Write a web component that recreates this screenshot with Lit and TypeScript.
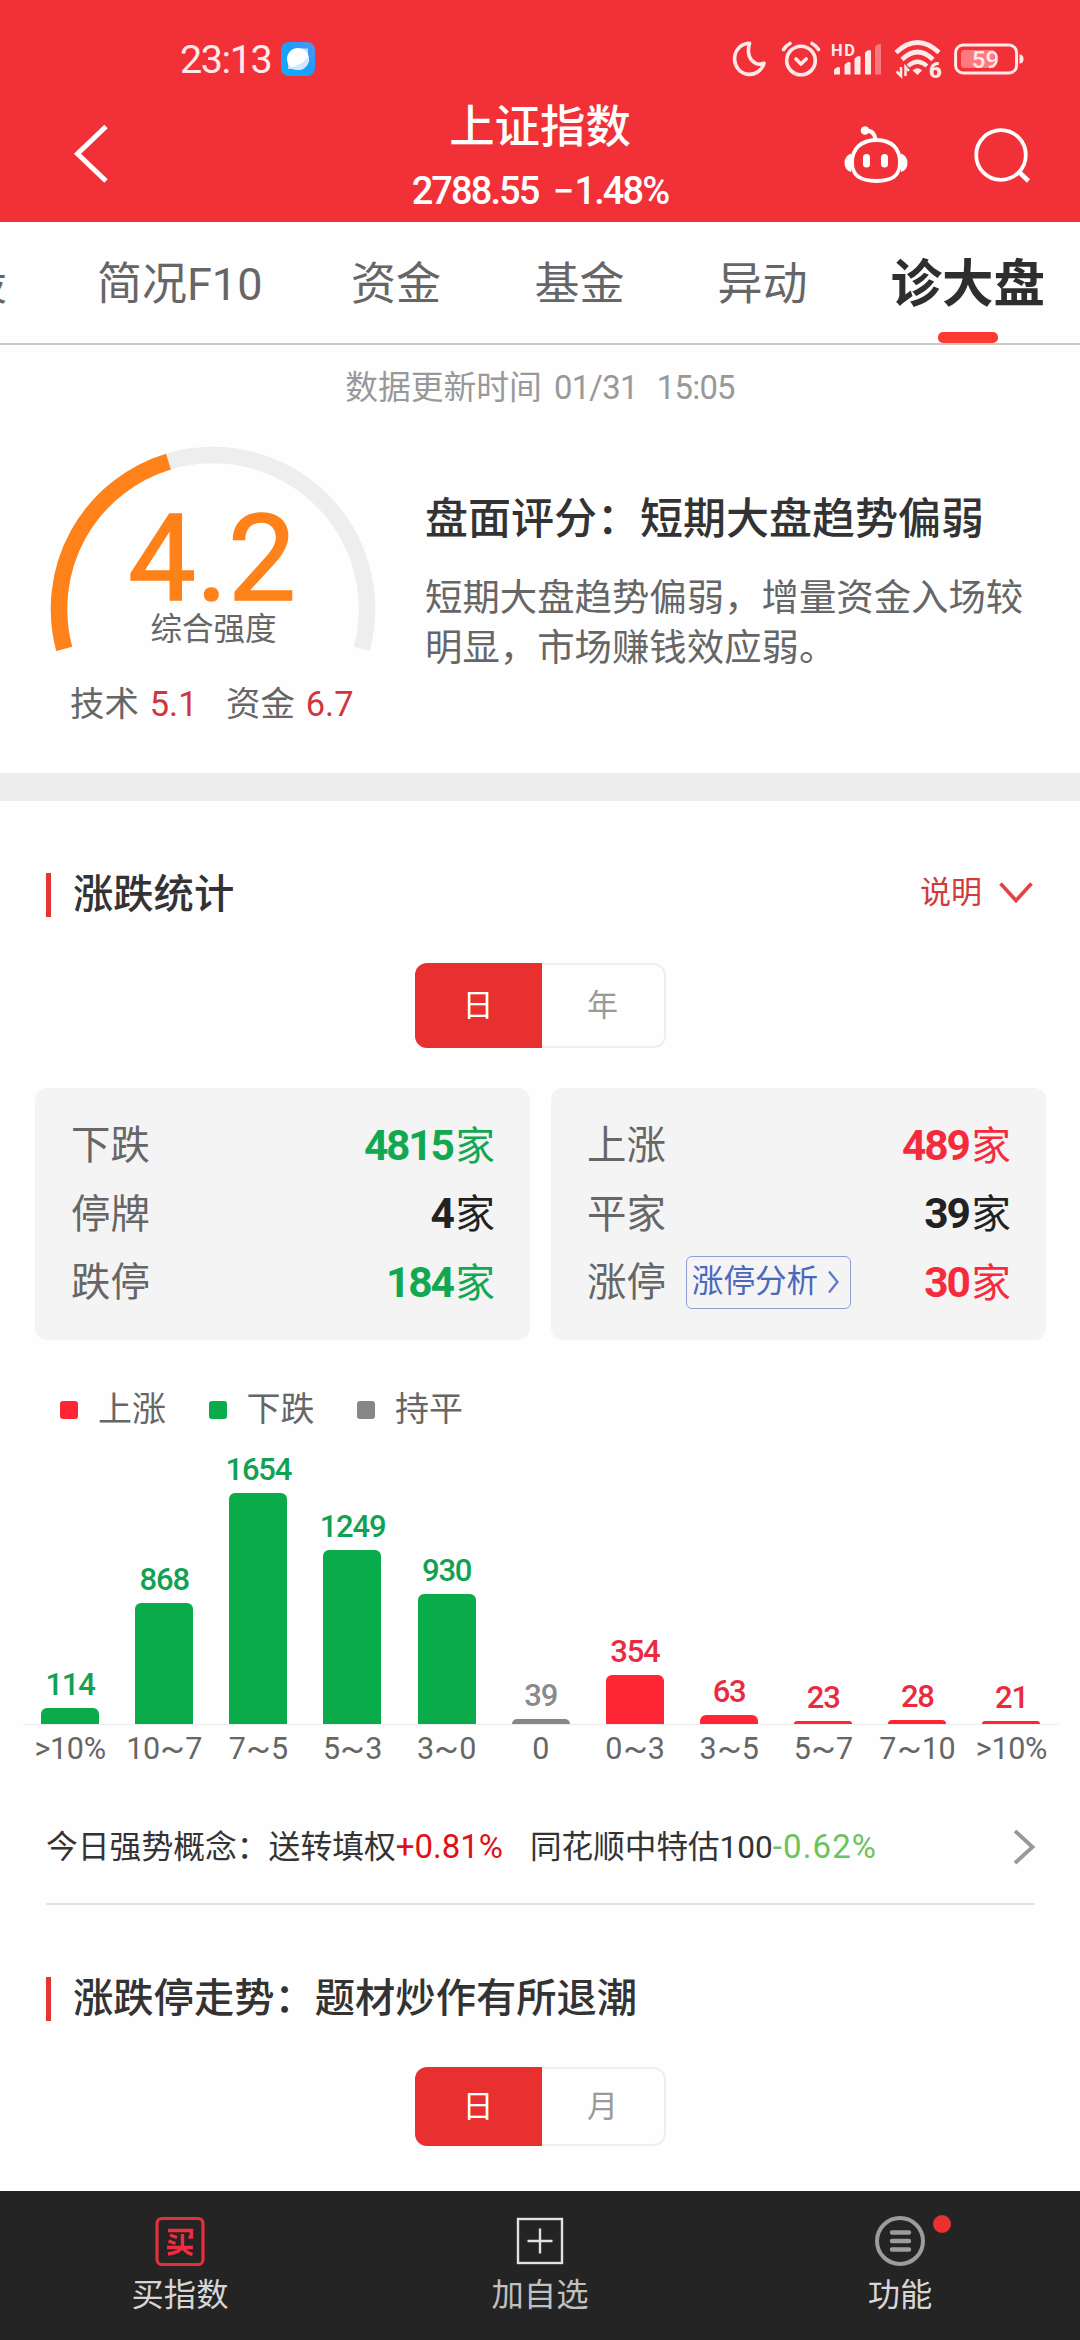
import { LitElement, html, css } from "lit";
import { customElement, property } from "lit/decorators.js";
import { classMap } from "lit/directives/class-map.js";
import { styleMap } from "lit/directives/style-map.js";

const reset = css`
  * {
    box-sizing: border-box;
  }
  svg {
    display: block;
    flex: none;
    overflow: visible;
  }
`;

@customElement("status-bar")
class StatusBar extends LitElement {
  static styles = [
    reset,
    css`
      :host {
        display: flex;
        align-items: center;
        height: 88px;
        padding: 30px 56px 0 180px;
        color: #ffe9e9;
      }
      .time {
        font-size: 39.5px;
        line-height: 58px;
        letter-spacing: -1.4px;
        width: 101px;
        padding-top: 1px;
        white-space: nowrap;
      }
      .spacer {
        flex: 1;
      }
      .moon {
        margin-right: 15px;
      }
      .alarm {
        margin-right: 10px;
      }
      .signal {
        margin-right: 12px;
      }
      .wifi {
        margin-right: 12px;
      }
    `,
  ];

  render() {
    return html`
      <div class="time">23:13</div>
      <svg width="34" height="34" viewBox="0 0 34 34">
        <defs>
          <linearGradient id="sky" x1="1" y1="0" x2="0" y2="1">
            <stop offset="0" stop-color="#5a93f5" />
            <stop offset="0.45" stop-color="#1d9cfa" />
            <stop offset="1" stop-color="#0bb0ff" />
          </linearGradient>
        </defs>
        <rect width="34" height="34" rx="8" fill="url(#sky)" />
        <path d="M20 6.5h7v7zM7 20v7h7z" fill="#b9dcfb" />
        <circle cx="17" cy="17" r="11" fill="#fff" />
        <path d="M27.6 14A11 11 0 0 1 10 25.4Q22 23 27.6 14z" fill="#cfe6fb" />
      </svg>
      <div class="spacer"></div>
      <svg class="moon" width="34" height="36" viewBox="0 0 34 36">
        <path
          d="M17.5 2.2A15 15.6 0 1 0 32 22.2C24.5 25.5 13 19 17.5 2.2z"
          fill="none" stroke="currentColor" stroke-width="3.6" stroke-linejoin="round"
        />
      </svg>
      <svg class="alarm" width="40" height="36" viewBox="0 0 40 36">
        <g fill="none" stroke="currentColor" stroke-width="3.6" stroke-linecap="round" stroke-linejoin="round">
          <circle cx="20" cy="19.5" r="14.3" />
          <path d="M15 18l5 5 5.2-5" />
          <path d="M2.5 8.5Q5 4.500 9 2.500M37.500 8.500Q35 4.500 31 2.500" />
        </g>
      </svg>
      <svg class="signal" width="51" height="36" viewBox="0 0 51 36">
        <text x="0" y="14.500" font-size="16.500" font-weight="700" textLength="24" fill="currentColor">HD</text>
        <g fill="currentColor">
          <path d="M3 33.500v-4q0-2 4-3.500 2 0 2 1v6.500zM13.500 33.500v-9q0-2 4-3.500 2 0 2 1v11.500zM23.500 33.500v-15q0-2 4-3.500 2 0 2 1v17.500zM34 33.500v-21q0-2 4-3.500 2 0 2 1v23.500z" />
          <path d="M44 33.500v-27q0-2 4-3.500 2 0 2 1v29.500z" opacity="0.4" />
        </g>
      </svg>
      <svg class="wifi" width="48" height="42" viewBox="0 0 48 42">
        <g fill="none" stroke="currentColor" stroke-width="4.600">
          <path d="M2 14.500Q23.500-5.500 45 14.500" />
          <path d="M8 21.500Q23.500 6.500 39 21.500" />
          <path d="M14 28Q23.500 19.500 33 28" stroke-width="4.200" />
        </g>
        <path d="M18.500 32.500q5-4.500 9.500 0l-4.500 4.500z" fill="currentColor" />
        <path d="M7 29v9l-4.500-4.500M11.500 38v-9l3.500 4" fill="none" stroke="currentColor" stroke-width="2.500" />
        <text x="35" y="39.500" font-size="22" font-weight="900" fill="currentColor">6</text>
      </svg>
      <svg width="70" height="32" viewBox="0 0 70 32">
        <rect x="1.600" y="2" width="61" height="28" rx="7.500" fill="none" stroke="currentColor" stroke-width="3" />
        <path d="M10.500 7H40v18H10.500a3.500 3.500 0 0 1-3.500-3.500v-11A3.500 3.500 0 0 1 10.500 7z" fill="#ff7a7e" />
        <path d="M65.500 11.500q4 0 4 4.500t-4 4.500z" fill="currentColor" />
        <text x="31.500" y="24.500" font-size="24" font-weight="500" text-anchor="middle" fill="currentColor">59</text>
      </svg>
    `;
  }
}

@customElement("title-bar")
class TitleBar extends LitElement {
  static styles = [
    reset,
    css`
      :host {
        display: grid;
        grid-template-columns: 290px 1fr 290px;
        height: 134px;
        color: #fff;
      }
      .back {
        margin: 36px 0 0 73px;
      }
      .titles {
        text-align: center;
      }
      .name {
        font-size: 45.4px;
        font-weight: 500;
        height: 76px;
        line-height: 79px;
      }
      .quote {
        display: flex;
        justify-content: center;
        gap: 12px;
        font-size: 38px;
        font-weight: 500;
        line-height: 54px;
        letter-spacing: -1.9px;
        white-space: nowrap;
      }
      .minus {
        display: inline-block;
        width: 24px;
      }
      .actions {
        display: flex;
        gap: 62px;
        padding: 36px 0 0 52px;
      }
    `,
  ];

  render() {
    return html`
      <svg class="back" width="36" height="60" viewBox="0 0 36 60">
        <path d="M33 2.500L4.500 29.700 33 57" fill="none" stroke="#fff" stroke-width="5" />
      </svg>
      <div class="titles">
        <div class="name">上证指数</div>
        <div class="quote"><span>2788.55</span><span><span class="minus">−</span>1.48%</span></div>
      </div>
      <div class="actions">
        <svg width="68" height="62" viewBox="0 0 68 62">
          <g fill="none" stroke="#fff" stroke-width="3.800">
            <path d="M34.500 16C50 16 58 25 58 38.500S50 57 34.500 57 10 52 10 38.500 19 16 34.500 16z" />
            <path d="M23 6.500Q32.500 6 33.500 16" />
          </g>
          <circle cx="23" cy="6.500" r="4.300" fill="#fff" />
          <path d="M9 29.500q-6.500 2.500-6.500 9.500t6.500 9zM59 29.500q6.500 2.500 6.500 9.500t-6.500 9z" fill="#fff" />
          <rect x="21" y="30" width="7" height="13.500" rx="3.500" fill="#fff" />
          <rect x="39" y="30" width="7" height="13.500" rx="3.500" fill="#fff" />
        </svg>
        <svg width="60" height="62" viewBox="0 0 60 62">
          <circle cx="29" cy="31" r="24.800" fill="none" stroke="#fff" stroke-width="3.800" />
          <path d="M46.500 47.500L56.500 57" stroke="#fff" stroke-width="4.500" />
        </svg>
      </div>
    `;
  }
}

@customElement("tab-strip")
class TabStrip extends LitElement {
  static styles = [
    reset,
    css`
      :host {
        display: block;
        height: 123px;
        overflow: hidden;
        border-bottom: 2px solid #c9c9c9;
      }
      .tabs {
        display: grid;
        grid-template-columns: 135px 254px 183.5px 183px 173px 155px;
        margin-left: -38px;
        font-size: 45px;
        line-height: 126px;
        color: #666;
        white-space: nowrap;
      }
      .tab {
        height: 121px;
      }
      .active {
        position: relative;
        font-size: 51.5px;
        font-weight: 700;
        color: #2e2e2e;
      }
      .active::after {
        content: "";
        position: absolute;
        left: 47px;
        bottom: 0;
        width: 60px;
        height: 11px;
        border-radius: 5px;
        background: #fb3a30;
      }
    `,
  ];

  render() {
    const tabs = ["股", "简况F10", "资金", "基金", "异动", "诊大盘"];
    return html`<div class="tabs">
      ${tabs.map((t, i) => html`<div class=${classMap({ tab: true, active: i === tabs.length - 1 })}>${t}</div>`)}
    </div>`;
  }
}

@customElement("score-panel")
class ScorePanel extends LitElement {
  static styles = [
    reset,
    css`
      :host {
        display: block;
        height: 428px;
      }
      .updated {
        display: flex;
        justify-content: center;
        gap: 19px;
        font-size: 32.8px;
        line-height: 87px;
        height: 84px;
        color: #999;
      }
      .num {
        letter-spacing: -0.7px;
      }
      .stamp {
        display: flex;
        gap: 12px;
      }
      .body {
        display: flex;
      }
      .left {
        width: 425px;
        padding: 17px 0 0 50px;
      }
      .metrics {
        display: flex;
        margin-top: 27px;
        padding-left: 20px;
        font-size: 34.4px;
        line-height: 50px;
        color: #666;
      }
      .metric {
        display: flex;
        width: 156px;
        gap: 11px;
      }
      .value {
        color: #d0343c;
      }
      .right {
        padding-top: 60px;
      }
      .headline {
        font-size: 43px;
        font-weight: 500;
        line-height: 60px;
        color: #333;
      }
      .summary {
        width: 610px;
        margin-top: 24px;
        font-size: 37.4px;
        line-height: 50px;
        color: #666;
      }
    `,
  ];

  @property({ type: Number }) score = 4.2;

  private arc(fraction: number) {
    const r = 154;
    const start = Math.PI * (195 / 180);
    const point = (a: number) => `${163 + r * Math.cos(a)} ${163 - r * Math.sin(a)}`;
    const sweep = Math.PI * (210 / 180) * fraction;
    return `M${point(start)}A${r} ${r} 0 ${sweep > Math.PI ? 1 : 0} 1 ${point(start - sweep)}`;
  }

  render() {
    return html`
      <div class="updated">
        <div class="stamp"><span>数据更新时间</span><span class="num">01/31</span></div>
        <span class="num">15:05</span>
      </div>
      <div class="body">
        <div class="left">
          <svg width="326" height="206" viewBox="0 0 326 206">
            <path d=${this.arc(1)} fill="none" stroke="#eeeeee" stroke-width="16.500" />
            <path d=${this.arc(this.score / 10)} fill="none" stroke="#ff8119" stroke-width="16.500" />
            <text x="162" y="154" font-size="121" text-anchor="middle" fill="#ff8119" stroke="#ff8119" stroke-width="1.500">4.2</text>
            <text x="163.500" y="194" font-size="31.500" text-anchor="middle" fill="#666">综合强度</text>
          </svg>
          <div class="metrics">
            <div class="metric"><span>技术</span><span class="value">5.1</span></div>
            <div class="metric"><span>资金</span><span class="value">6.7</span></div>
          </div>
        </div>
        <div class="right">
          <div class="headline">盘面评分：短期大盘趋势偏弱</div>
          <div class="summary">短期大盘趋势偏弱，增量资金入场较明显，市场赚钱效应弱。</div>
        </div>
      </div>
    `;
  }
}

@customElement("section-title")
class SectionTitle extends LitElement {
  static styles = [
    reset,
    css`
      :host {
        display: flex;
        align-items: center;
        height: 44px;
        margin: 72px 46px 0;
      }
      .mark {
        width: 5px;
        height: 44px;
        background: #e43535;
      }
      .label {
        flex: 1;
        padding: 0 0 1px 22px;
        font-size: 40.3px;
        font-weight: 500;
        line-height: 42px;
        color: #333;
        white-space: nowrap;
      }
      .help {
        display: flex;
        align-items: center;
        gap: 16px;
        margin: -5px 0 0 0;
        font-size: 31px;
        line-height: 40px;
        color: #d23a3a;
      }
    `,
  ];

  @property() label = "";
  @property() help = "";

  render() {
    return html`
      <div class="mark"></div>
      <div class="label">${this.label}</div>
      ${this.help
        ? html`<div class="help">
            <span>${this.help}</span>
            <svg width="36" height="24" viewBox="0 0 36 24">
              <path d="M2.500 2.500L18 19.500 33.500 2.500" fill="none" stroke="#e04444" stroke-width="3.600" />
            </svg>
          </div>`
        : null}
    `;
  }
}

@customElement("period-toggle")
class PeriodToggle extends LitElement {
  static styles = [
    reset,
    css`
      :host {
        display: flex;
        width: 251px;
        height: 85px;
        margin: 46px auto 0;
        border-radius: 12px;
        overflow: hidden;
        font-size: 31px;
        line-height: 46px;
      }
      :host([compact]) {
        height: 79px;
      }
      .on,
      .off {
        display: flex;
        align-items: center;
        justify-content: center;
        padding-top: 1px;
      }
      .on {
        width: 127px;
        background: #e93030;
        color: #fff;
      }
      .off {
        flex: 1;
        border: 2px solid #eeeeee;
        border-left: 0;
        border-radius: 0 12px 12px 0;
        color: #999;
      }
    `,
  ];

  @property() first = "";
  @property() second = "";

  render() {
    return html`<div class="on">${this.first}</div>
      <div class="off">${this.second}</div>`;
  }
}

type Row = { name: string; count: number; tone: string; link?: string };

@customElement("count-card")
class CountCard extends LitElement {
  static styles = [
    reset,
    css`
      :host {
        display: block;
        flex: 1;
        height: 252px;
        padding: 24px 35px 20px 36px;
        border-radius: 12px;
        background: #f4f4f4;
      }
      .row {
        display: flex;
        align-items: center;
        height: 68.5px;
        font-size: 39.4px;
        line-height: 68px;
        color: #666;
      }
      .link {
        display: flex;
        align-items: center;
        gap: 10px;
        height: 53px;
        margin: -2px 0 0 20px;
        padding: 0 11px 0 5px;
        border: 1.5px solid #8e9ed3;
        border-radius: 6px;
        font-size: 31.6px;
        line-height: 50px;
        color: #4b68bd;
        white-space: nowrap;
      }
      .count {
        flex: 1;
        text-align: right;
        white-space: nowrap;
      }
      .digits {
        font-size: 42.5px;
        font-weight: 700;
        letter-spacing: -2.2px;
        margin-right: 3px;
      }
      .down {
        color: #11a851;
      }
      .flat {
        color: #222;
      }
      .up {
        color: #f52b3d;
      }
    `,
  ];

  @property({ attribute: false }) rows: Row[] = [];

  render() {
    return this.rows.map(
      (r) => html`<div class="row">
        <span>${r.name}</span>
        ${r.link
          ? html`<span class="link"
              >${r.link}<svg width="11" height="22" viewBox="0 0 11 22">
                <path d="M1 0.500l8.500 10.500-8.500 10.500" fill="none" stroke="#6079c6" stroke-width="2.300" /></svg
            ></span>`
          : null}
        <span class="count ${r.tone}"><span class="digits">${r.count}</span>家</span>
      </div>`
    );
  }
}

@customElement("change-chart")
class ChangeChart extends LitElement {
  static styles = [
    reset,
    css`
      :host {
        display: block;
      }
      .legend {
        display: flex;
        height: 48px;
        margin: 45px 0 0 60px;
        line-height: 48px;
        font-size: 34px;
        color: #666;
      }
      .key {
        display: flex;
        align-items: center;
        gap: 20px;
        width: 148.5px;
      }
      .swatch {
        width: 18px;
        height: 18px;
        margin-top: 1px;
        border-radius: 3px;
      }
      .plot {
        display: grid;
        grid-template-columns: repeat(11, 94.15px);
        align-items: end;
        height: 292px;
        margin-left: 23px;
        width: 1035.6px;
        border-bottom: 1px solid #ececec;
      }
      .col {
        display: flex;
        flex-direction: column;
        align-items: center;
      }
      .value {
        font-size: 31px;
        font-weight: 500;
        line-height: 34px;
        letter-spacing: -1.2px;
        padding-bottom: 6px;
      }
      .bar {
        width: 58px;
        border-radius: 6px 6px 0 0;
      }
      .axis {
        display: grid;
        grid-template-columns: repeat(11, 94.15px);
        margin-left: 23px;
        font-size: 30.5px;
        line-height: 48px;
        height: 50px;
        text-align: center;
        letter-spacing: -0.3px;
        color: #666;
        white-space: nowrap;
      }
      .to {
        display: inline-block;
        transform: scaleX(1.2);
        margin: 0 2.5px;
      }
      .down {
        color: #11a153;
      }
      .flat {
        color: #8a8a8a;
      }
      .up {
        color: #ea2b3f;
      }
      .fill-down {
        background: #0aab4b;
      }
      .fill-flat {
        background: #878787;
      }
      .fill-up {
        background: #fe2634;
      }
    `,
  ];

  private data: [string[], number, string][] = [
    [[">10%"], 114, "down"],
    [["10", "7"], 868, "down"],
    [["7", "5"], 1654, "down"],
    [["5", "3"], 1249, "down"],
    [["3", "0"], 930, "down"],
    [["0"], 39, "flat"],
    [["0", "3"], 354, "up"],
    [["3", "5"], 63, "up"],
    [["5", "7"], 23, "up"],
    [["7", "10"], 28, "up"],
    [[">10%"], 21, "up"],
  ];

  render() {
    return html`
      <div class="legend">
        <div class="key"><span class="swatch fill-up"></span>上涨</div>
        <div class="key"><span class="swatch fill-down"></span>下跌</div>
        <div class="key"><span class="swatch fill-flat"></span>持平</div>
      </div>
      <div class="plot">
        ${this.data.map(
          ([, n, tone]) => html`<div class="col">
            <div class="value ${tone}">${n}</div>
            <div class="bar fill-${tone}" style=${styleMap({ height: `${Math.max(3, Math.round(n * 0.1395))}px` })}></div>
          </div>`
        )}
      </div>
      <div class="axis">
        ${this.data.map(([[from, to]]) =>
          to === undefined ? html`<span>${from}</span>` : html`<span>${from}<span class="to">~</span>${to}</span>`
        )}
      </div>
    `;
  }
}

@customElement("concept-row")
class ConceptRow extends LitElement {
  static styles = [
    reset,
    css`
      :host {
        display: flex;
        align-items: center;
        height: 114px;
        margin: 16px 45px 0 46px;
        border-bottom: 2px solid #e3e3e3;
        font-size: 31.6px;
        line-height: 48px;
        color: #333;
        white-space: nowrap;
      }
      .first {
        display: block;
        width: 484px;
        font-size: 31.8px;
      }
      .second {
        flex: 1;
      }
      .rise,
      .fall {
        font-size: 33px;
      }
      .rise {
        color: #e01016;
      }
      .fall {
        color: #6bc35b;
        letter-spacing: 1.1px;
      }
    `,
  ];

  render() {
    return html`
      <span class="first">今日强势概念：送转填权<span class="rise">+0.81%</span></span>
      <span class="second">同花顺中特估100<span class="fall">-0.62%</span></span>
      <svg width="22" height="36" viewBox="0 0 22 36">
        <path d="M2 2l17.500 16L2 34" fill="none" stroke="#999" stroke-width="3.800" />
      </svg>
    `;
  }
}

@customElement("bottom-bar")
class BottomBar extends LitElement {
  static styles = [
    reset,
    css`
      :host {
        display: grid;
        grid-template-columns: repeat(3, 1fr);
        height: 149px;
        margin-top: auto;
        background: #242424;
        color: #d6d6d6;
        font-size: 32.3px;
        line-height: 48px;
      }
      .item {
        display: flex;
        flex-direction: column;
        align-items: center;
        gap: 4px;
        padding-top: 24px;
      }
      .dim {
        color: #c0c0c0;
      }
      .icon {
        position: relative;
      }
      .dot {
        position: absolute;
        left: 59px;
        top: 0;
        width: 18px;
        height: 18px;
        border-radius: 50%;
        background: #ea3131;
      }
    `,
  ];

  render() {
    return html`
      <div class="item">
        <svg width="52" height="52" viewBox="0 0 52 52">
          <rect x="3" y="3.500" width="46" height="46" rx="5" fill="none" stroke="#e5303c" stroke-width="3.200" />
          <g fill="none" stroke="#f02c40" stroke-width="3.400">
            <path d="M14 15.500h23.500v6.500h-3" />
            <path d="M16 20l7 2.500M14.500 26l7 2.500" />
            <path d="M13 32.500h26M28.500 19v12q-2 6.500-14.500 8M29 33q3 4.500 9.500 6.500" />
          </g>
        </svg>
        <span>买指数</span>
      </div>
      <div class="item dim">
        <svg width="52" height="52" viewBox="0 0 52 52">
          <rect x="4" y="4" width="44" height="44" fill="none" stroke="#e2e2e2" stroke-width="2.400" />
          <path d="M26 13.500v25M13.500 26h25" stroke="#e2e2e2" stroke-width="2.400" />
        </svg>
        <span>加自选</span>
      </div>
      <div class="item">
        <div class="icon">
          <svg width="52" height="52" viewBox="0 0 52 52">
            <circle cx="26" cy="26" r="23" fill="none" stroke="#9c9c9c" stroke-width="4" />
            <path d="M18 17.500h17M18 26h17M18 34.500h17" stroke="#9c9c9c" stroke-width="4.400" stroke-linecap="round" />
          </svg>
          <span class="dot"></span>
        </div>
        <span>功能</span>
      </div>
    `;
  }
}

@customElement("app-root")
class AppRoot extends LitElement {
  static styles = [
    reset,
    css`
      :host {
        display: flex;
        flex-direction: column;
        width: 1080px;
        height: 2340px;
        overflow: hidden;
        background: #fefefe;
        font-family: Roboto, "Noto Sans CJK SC", sans-serif;
      }
      .top {
        height: 222px;
        background: #f23037;
      }
      .band {
        height: 28px;
        background: #ededed;
      }
      .cards {
        display: flex;
        gap: 21px;
        margin: 40px 34px 0 35px;
      }
    `,
  ];

  private falling: Row[] = [
    { name: "下跌", count: 4815, tone: "down" },
    { name: "停牌", count: 4, tone: "flat" },
    { name: "跌停", count: 184, tone: "down" },
  ];

  private rising: Row[] = [
    { name: "上涨", count: 489, tone: "up" },
    { name: "平家", count: 39, tone: "flat" },
    { name: "涨停", count: 30, tone: "up", link: "涨停分析" },
  ];

  render() {
    return html`
      <div class="top">
        <status-bar></status-bar>
        <title-bar></title-bar>
      </div>
      <tab-strip></tab-strip>
      <score-panel></score-panel>
      <div class="band"></div>
      <section-title label="涨跌统计" help="说明"></section-title>
      <period-toggle first="日" second="年"></period-toggle>
      <div class="cards">
        <count-card .rows=${this.falling}></count-card>
        <count-card .rows=${this.rising}></count-card>
      </div>
      <change-chart></change-chart>
      <concept-row></concept-row>
      <section-title label="涨跌停走势：题材炒作有所退潮"></section-title>
      <period-toggle compact first="日" second="月"></period-toggle>
      <bottom-bar></bottom-bar>
    `;
  }
}
